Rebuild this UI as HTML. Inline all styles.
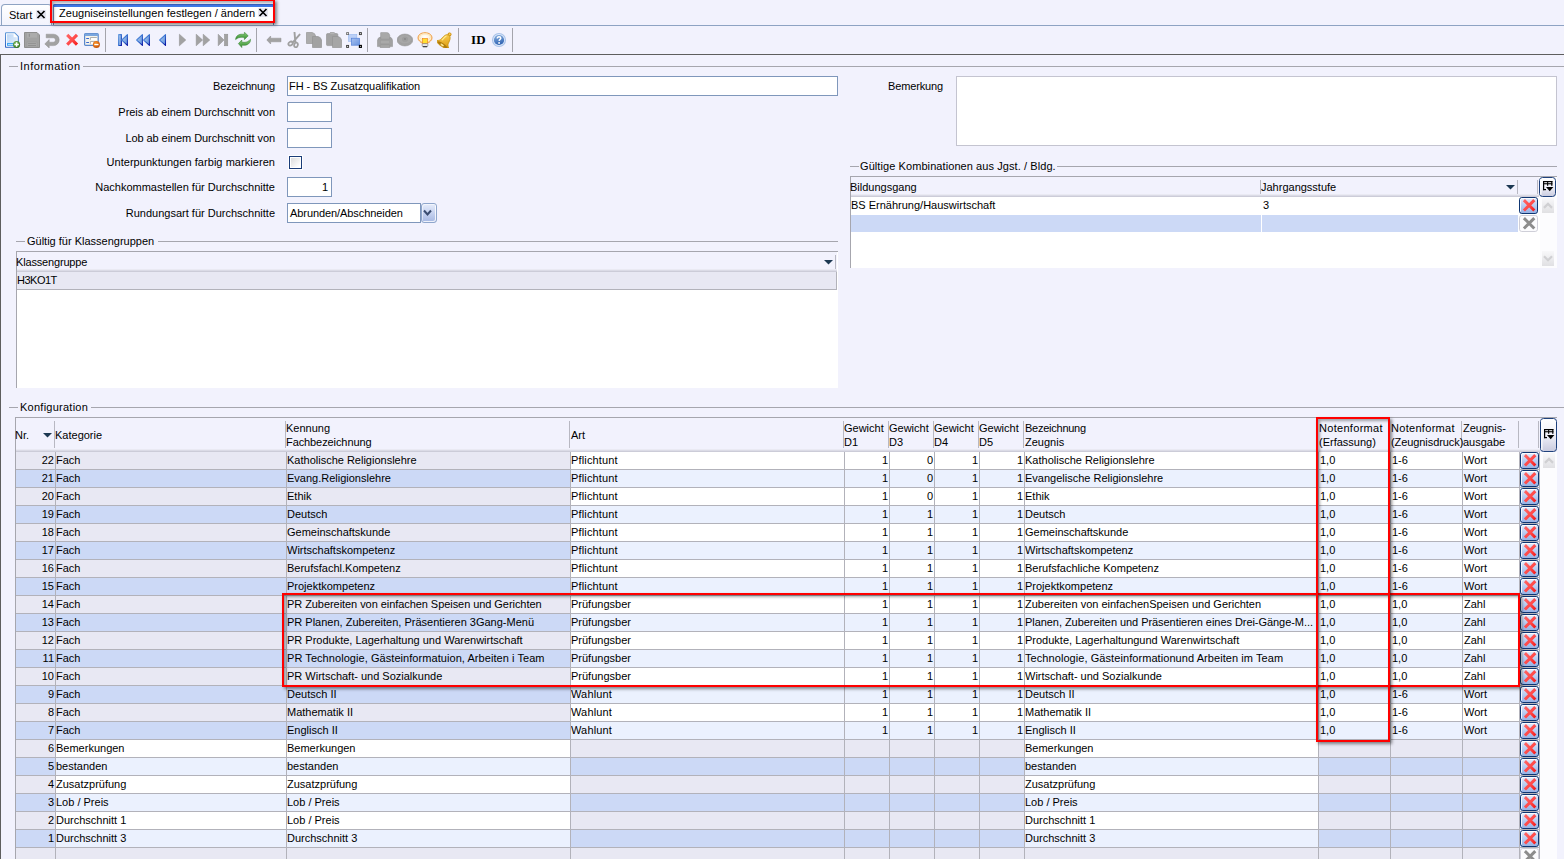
<!DOCTYPE html>
<html><head><meta charset="utf-8"><title>Zeugniseinstellungen festlegen / ändern</title>
<style>
*{box-sizing:border-box;margin:0;padding:0}
html,body{width:1564px;height:859px;overflow:hidden;background:#f2f2fd;}
body{position:relative;font-family:"Liberation Sans",sans-serif;font-size:11px;color:#000;line-height:13px;}
.a{position:absolute;white-space:nowrap;}
.t{position:absolute;white-space:nowrap;height:13px;line-height:13px;}
.r{text-align:right;}
.inp{position:absolute;background:#fff;border:1px solid #7f97bb;}
.gl{position:absolute;height:1px;background:#a6a6ae;}
.hd{position:absolute;width:1px;background:#b8b8c2;}
.cell{position:absolute;height:17px;line-height:17px;white-space:nowrap;overflow:hidden;}
.vl{position:absolute;width:1px;background:#b2b2ba;}
.hl{position:absolute;height:1px;background:#b2b2ba;}
.red{position:absolute;border:2px solid #ff0000;box-shadow:2px 2px 3px rgba(0,0,0,.45), inset 2px 2px 3px rgba(0,0,0,.35);}
.del{position:absolute;width:19px;height:17px;border:1px solid #1f4180;border-radius:3px;background:linear-gradient(#f4f8ff 0%,#dfe9fb 35%,#a9c3f0 100%);}
.delg{position:absolute;width:19px;height:17px;border:1px solid #d0d0d8;border-radius:3px;background:linear-gradient(#ffffff,#ececf2);}
.sb{position:absolute;background:#fcfcfe;}
.sbb{position:absolute;background:linear-gradient(90deg,#f4f4f8,#e4e4ea);}
</style></head><body>
<svg width="0" height="0" style="position:absolute"><defs>
<linearGradient id="gb" x1="0" y1="0" x2="1" y2="0"><stop offset="0" stop-color="#a9c9f2"/><stop offset="0.6" stop-color="#4a86dc"/><stop offset="1" stop-color="#0b2fa8"/></linearGradient>
<linearGradient id="gbf" x1="0" y1="0" x2="1" y2="0.4"><stop offset="0" stop-color="#b6cef0"/><stop offset="1" stop-color="#6c9cde"/></linearGradient>
<linearGradient id="gbs" x1="0" y1="0" x2="1" y2="1"><stop offset="0" stop-color="#6a9ee0"/><stop offset="0.5" stop-color="#3670d0"/><stop offset="1" stop-color="#0610a0"/></linearGradient>
<linearGradient id="gdoc" x1="0" y1="0" x2="1" y2="1"><stop offset="0" stop-color="#bcd6f6"/><stop offset="1" stop-color="#e6f0fc"/></linearGradient>
<linearGradient id="gdocb" x1="0" y1="0" x2="0" y2="1"><stop offset="0" stop-color="#5f98d8"/><stop offset="1" stop-color="#2f62c0"/></linearGradient>
<radialGradient id="ggreen" cx="0.4" cy="0.35" r="0.7"><stop offset="0" stop-color="#7fc060"/><stop offset="1" stop-color="#2c6c12"/></radialGradient>
<radialGradient id="gor" cx="0.4" cy="0.35" r="0.7"><stop offset="0" stop-color="#ff9a30"/><stop offset="1" stop-color="#c04a00"/></radialGradient>
<linearGradient id="gred" x1="0" y1="0" x2="1" y2="1"><stop offset="0" stop-color="#ff6464"/><stop offset="0.55" stop-color="#ff4a4a"/><stop offset="1" stop-color="#f51c1c"/></linearGradient>
<linearGradient id="ggr" x1="0" y1="0" x2="0" y2="1"><stop offset="0" stop-color="#8fd080"/><stop offset="1" stop-color="#2f8a2a"/></linearGradient>
<linearGradient id="gsel" x1="0" y1="0" x2="1" y2="1"><stop offset="0" stop-color="#a8c2f0"/><stop offset="1" stop-color="#6a94e0"/></linearGradient>
<linearGradient id="ghelp" x1="0" y1="0" x2="0.3" y2="1"><stop offset="0" stop-color="#8ab2e2"/><stop offset="1" stop-color="#3366b4"/></linearGradient>
<linearGradient id="gbell" x1="0" y1="0" x2="1" y2="1"><stop offset="0" stop-color="#ffd860"/><stop offset="1" stop-color="#d89408"/></linearGradient>
<radialGradient id="gbulb" cx="0.5" cy="0.4" r="0.6"><stop offset="0" stop-color="#ffffff"/><stop offset="0.7" stop-color="#fff0d0"/><stop offset="1" stop-color="#f4a850"/></radialGradient>
<linearGradient id="gsb" x1="0" y1="0" x2="0" y2="1"><stop offset="0" stop-color="#f8f8fa"/><stop offset="1" stop-color="#e0e0e3"/></linearGradient>
<linearGradient id="gdel" x1="0" y1="0" x2="0" y2="1"><stop offset="0" stop-color="#e8effc"/><stop offset="0.45" stop-color="#bdd0f3"/><stop offset="1" stop-color="#94b0e4"/></linearGradient>
</defs></svg>
<div class="a" style="left:0;top:25px;width:1564px;height:1px;background:#8ea3c3"></div>
<div class="a" style="left:1px;top:4px;width:51px;height:21px;border:1px solid #8ea3c3;border-bottom:none;border-radius:4px 4px 0 0;background:linear-gradient(#ffffff,#f2f3fd)"></div>
<div class="t " style="left:9px;top:9px;">Start</div>
<svg class="a" style="left:36px;top:10px" width="10" height="9" viewBox="0 0 10 9"><rect x="0" y="0" width="10" height="9" fill="#e4e4ee"/><path d="M1.5 1 L8.5 8 M8.5 1 L1.5 8" stroke="#000" stroke-width="1.7"/></svg>
<div class="a" style="left:53px;top:4px;width:221px;height:21px;background:#fff;border-left:1px solid #6c86b0;border-right:1px solid #6c86b0;border-radius:2px 2px 0 0;"></div>
<div class="a" style="left:53px;top:4px;width:221px;height:3px;background:#3f78e6;border-radius:2px 2px 0 0;border-top:1px solid #3a62c0"></div>
<div class="t " style="left:59px;top:7px;letter-spacing:0.03px">Zeugniseinstellungen festlegen / ändern</div>
<svg class="a" style="left:258px;top:8px" width="10" height="9" viewBox="0 0 10 9"><rect x="0" y="0" width="10" height="9" fill="#e8e8f2"/><path d="M1.5 1 L8.5 8 M8.5 1 L1.5 8" stroke="#000" stroke-width="1.7"/></svg>
<div class="red" style="left:50px;top:-1px;width:225px;height:24px;box-shadow:2px 2px 3px rgba(0,0,0,.45), inset 2px 2px 3px rgba(0,0,0,.3)"></div>
<svg class="a" style="left:5px;top:32px" width="16" height="16" viewBox="0 0 16 16"><path d="M1.2 0.7 H9.6 L13.3 4.4 V14.4 Q13.3 15.3 12.4 15.3 H1.2 Q0.5 15.3 0.5 14.4 V1.5 Q0.5 0.7 1.2 0.7 Z" fill="#fff" stroke="url(#gdocb)" stroke-width="1.1"/><path d="M2 2.2 H8.6 V5.3 H11.8 V13.8 H2 Z" fill="url(#gdoc)"/><rect x="2" y="11" width="9" height="2.8" fill="#3fa4f4"/><rect x="3" y="12" width="5" height="0.9" fill="#bfe2ff"/><circle cx="11.6" cy="12.5" r="3.5" fill="url(#ggreen)"/><path d="M11.6 10.3 V14.7 M9.4 12.5 H13.8" stroke="#fff" stroke-width="1.5"/></svg>
<svg class="a" style="left:24px;top:32px" width="16" height="16" viewBox="0 0 16 16"><path d="M0.5 0.5 H13 L15.5 3 V15.5 H0.5 Z" fill="#a2a2a2" stroke="#8e8e8e" stroke-width="1"/><rect x="3" y="1" width="10" height="4.6" fill="#acacac"/><rect x="4.8" y="1.8" width="1.1" height="3" fill="#8e8e8e"/><rect x="3" y="10" width="10" height="5" fill="#acacac" stroke="#989898" stroke-width="0.6"/><rect x="4" y="11.2" width="8" height="0.9" fill="#8e8e8e"/><rect x="4" y="13" width="8" height="0.9" fill="#8e8e8e"/></svg>
<svg class="a" style="left:44px;top:32px" width="16" height="16" viewBox="0 0 16 16"><path d="M2.2 2.2 H9.5 A5.3 5.3 0 0 1 9.5 13.6 H5.2 V16 L0.8 11.9 L5.2 7.6 V10.2 H9.3 A2.2 2.2 0 0 0 9.3 5.8 H2.2 Z" fill="#a2a2a2" stroke="#8e8e8e" stroke-width="0.5"/></svg>
<svg class="a" style="left:64px;top:32px" width="16" height="16" viewBox="0 0 16 16"><path d="M3.2 2.8 L13 12.6 M13 2.8 L3.2 12.6" stroke="url(#gred)" stroke-width="3.1" stroke-linecap="butt"/></svg>
<svg class="a" style="left:84px;top:32px" width="16" height="16" viewBox="0 0 16 16"><rect x="0.6" y="1.6" width="13.6" height="11.8" rx="1" fill="#f6f4ec" stroke="#5a88cc" stroke-width="1.2"/><rect x="0.6" y="1.6" width="13.6" height="2.4" fill="#7aa6de"/><rect x="2.2" y="6" width="2.8" height="1" fill="#3a68d0"/><rect x="2.2" y="10" width="2.8" height="1" fill="#3a68d0"/><path d="M6.4 7.8 V5.6 H12.8" fill="none" stroke="#a0a0a0" stroke-width="0.9"/><path d="M6.4 11.8 V9.6 H12.8" fill="none" stroke="#a0a0a0" stroke-width="0.9"/><rect x="6.9" y="6.1" width="6" height="2" fill="#fff"/><rect x="6.9" y="10.1" width="6" height="2" fill="#fff"/><circle cx="12.4" cy="12.5" r="3.5" fill="url(#gor)"/><rect x="10.3" y="11.9" width="4.2" height="1.3" fill="#fff"/></svg>
<svg class="a" style="left:116px;top:32px" width="16" height="16" viewBox="0 0 16 16"><rect x="2.6" y="2.6" width="2.8" height="10.8" fill="url(#gbf)" stroke="url(#gbs)" stroke-width="1.05" stroke-linejoin="round"/><path d="M11.4 2.6 V13.4 L5.8 8 Z" fill="url(#gbf)" stroke="url(#gbs)" stroke-width="1.05" stroke-linejoin="round"/></svg>
<svg class="a" style="left:135px;top:32px" width="16" height="16" viewBox="0 0 16 16"><path d="M7.4 2.6 V13.4 L1.6 8 Z" fill="url(#gbf)" stroke="url(#gbs)" stroke-width="1.05" stroke-linejoin="round"/><path d="M14.4 2.6 V13.4 L8.6 8 Z" fill="url(#gbf)" stroke="url(#gbs)" stroke-width="1.05" stroke-linejoin="round"/></svg>
<svg class="a" style="left:155px;top:32px" width="16" height="16" viewBox="0 0 16 16"><path d="M10.5 2.6 V13.4 L4.6 8 Z" fill="url(#gbf)" stroke="url(#gbs)" stroke-width="1.05" stroke-linejoin="round"/></svg>
<svg class="a" style="left:175px;top:32px" width="16" height="16" viewBox="0 0 16 16"><path d="M4.4 2.2 V13.8 L10.8 8 Z" fill="#a2a2a2" stroke="#8e8e8e" stroke-width="0.5"/></svg>
<svg class="a" style="left:195px;top:32px" width="16" height="16" viewBox="0 0 16 16"><path d="M1.2 2.2 V13.8 L7.6 8 Z" fill="#a2a2a2" stroke="#8e8e8e" stroke-width="0.5"/><path d="M8.2 2.2 V13.8 L14.8 8 Z" fill="#a2a2a2" stroke="#8e8e8e" stroke-width="0.5"/></svg>
<svg class="a" style="left:215px;top:32px" width="16" height="16" viewBox="0 0 16 16"><path d="M3.2 2.2 V13.8 L9 8 Z" fill="#a2a2a2" stroke="#8e8e8e" stroke-width="0.5"/><rect x="9.4" y="2.2" width="3.4" height="11.6" fill="#a2a2a2" stroke="#8e8e8e" stroke-width="0.5"/></svg>
<svg class="a" style="left:235px;top:32px" width="16" height="16" viewBox="0 0 16 16"><path d="M0.6 7.6 C0.8 3.6 4 2 7.4 2.2 L9.4 2.3 V0.2 L13.2 3.8 L9.4 7.6 V5.4 L7 5.3 C4.4 5.2 2.6 6 0.6 7.6 Z" fill="url(#ggr)" stroke="#2c7a26" stroke-width="0.5"/><path d="M15.6 7.2 C15.6 11.4 12.4 13.4 9 13.3 L6.8 13.2 V15.6 L3.4 11.6 L6.8 8 V10.2 L9.2 10.3 C11.8 10.4 13.6 9.2 15.6 7.2 Z" fill="url(#ggr)" stroke="#2c7a26" stroke-width="0.5"/></svg>
<svg class="a" style="left:266px;top:32px" width="16" height="16" viewBox="0 0 16 16"><path d="M0.8 8 L4.6 4 V6.2 H15 V9.8 H4.6 V12 Z" fill="#a2a2a2" stroke="#8e8e8e" stroke-width="0.5"/></svg>
<svg class="a" style="left:286px;top:32px" width="16" height="16" viewBox="0 0 16 16"><path d="M8.5 0.4 L9.3 9.6 M13.6 2.6 L6.6 10.6" stroke="#a0a0a0" stroke-width="1.9" fill="none" stroke-linecap="round"/><ellipse cx="4.6" cy="11.6" rx="2.3" ry="1.8" transform="rotate(-35 4.6 11.6)" fill="none" stroke="#a0a0a0" stroke-width="1.8"/><ellipse cx="10" cy="12.9" rx="1.8" ry="2.4" transform="rotate(15 10 12.9)" fill="none" stroke="#a0a0a0" stroke-width="1.8"/></svg>
<svg class="a" style="left:306px;top:32px" width="16" height="16" viewBox="0 0 16 16"><path d="M0.5 0.5 H6.2 Q9.2 1.2 9.6 4 V11.5 H0.5 Z" fill="#acacac" stroke="#979797" stroke-width="0.7"/><path d="M6.5 4.5 H12 Q15 5.2 15.5 8 V15.5 H6.5 Z" fill="#a2a2a2" stroke="#949494" stroke-width="0.7"/></svg>
<svg class="a" style="left:326px;top:32px" width="16" height="16" viewBox="0 0 16 16"><path d="M1.5 1.6 H3.6 Q4 0.4 5 0.4 H7.6 Q8.6 0.4 9 1.6 H10.8 Q11.8 1.6 11.8 2.6 V12.6 Q11.8 13.6 10.8 13.6 H1.5 Q0.5 13.6 0.5 12.6 V2.6 Q0.5 1.6 1.5 1.6 Z" fill="#a2a2a2" stroke="#8e8e8e" stroke-width="0.6"/><rect x="4.2" y="1" width="4.2" height="1.2" fill="#b4b4b4"/><path d="M6.5 4.5 H12 Q15 5.2 15.5 8 V15.5 H6.5 Z" fill="#a6a6a6" stroke="#949494" stroke-width="0.7"/></svg>
<svg class="a" style="left:346px;top:32px" width="16" height="16" viewBox="0 0 16 16"><rect x="2.4" y="2.4" width="8.4" height="7" fill="#bcd0f6" stroke="#98b8f0" stroke-width="0.6"/><rect x="5.4" y="6.2" width="8.2" height="7" fill="url(#gsel)" stroke="#4a78d4" stroke-width="0.6"/><rect x="0.6" y="0.6" width="2" height="2" fill="#e4e4e4" stroke="#6a6a6a" stroke-width="0.8"/><rect x="13.4" y="0.6" width="2" height="2" fill="#ddd" stroke="#3a3a3a" stroke-width="0.9"/><rect x="0.6" y="13.4" width="2" height="2" fill="#ddd" stroke="#3a3a3a" stroke-width="0.9"/><rect x="13.4" y="13.4" width="2" height="2" fill="#ddd" stroke="#000" stroke-width="1.1"/></svg>
<svg class="a" style="left:377px;top:32px" width="16" height="16" viewBox="0 0 16 16"><path d="M0.4 14.6 V9 Q0.4 5.2 4 4.9 H12 Q15.6 5.2 15.6 9 V14.6 Z" fill="#a2a2a2" stroke="#8e8e8e" stroke-width="0.5"/><path d="M3.6 7.2 V0.9 Q3.6 0.4 4.2 0.4 H9.6 Q12.6 0.8 12.8 3.6 V7.2 Z" fill="#a8a8a8" stroke="#8e8e8e" stroke-width="0.5"/><rect x="3.6" y="8.4" width="9" height="3.4" fill="#a9a9a9" stroke="#999" stroke-width="0.4"/><path d="M3.2 15.7 V13.4 Q3.2 12.6 4 12.6 H12 Q12.8 12.6 12.8 13.4 V15.7 Z" fill="#a6a6a6" stroke="#8e8e8e" stroke-width="0.5"/></svg>
<svg class="a" style="left:397px;top:32px" width="16" height="16" viewBox="0 0 16 16"><ellipse cx="7.9" cy="8" rx="7.9" ry="6" fill="#a2a2a2" stroke="#8e8e8e" stroke-width="0.5"/><ellipse cx="7.9" cy="7.4" rx="6.6" ry="4.4" fill="#a7a7a7" stroke="#9c9c9c" stroke-width="0.4"/><ellipse cx="8" cy="7.2" rx="3" ry="2.6" fill="#9e9e9e"/><circle cx="8" cy="7" r="0.9" fill="#868686"/></svg>
<svg class="a" style="left:417px;top:32px" width="16" height="16" viewBox="0 0 16 16"><path d="M8 0.7 C12.2 0.7 15 3 15 6 C15 8.6 12.4 9.6 11 11.4 H5 C3.6 9.6 1 8.6 1 6 C1 3 3.8 0.7 8 0.7 Z" fill="url(#gbulb)" stroke="#f0a048" stroke-width="1"/><ellipse cx="8" cy="5" rx="5.4" ry="3" fill="none" stroke="#fbd8a0" stroke-width="0.6"/><rect x="5.6" y="6.6" width="4.8" height="4.8" fill="#ffe030" stroke="#f08820" stroke-width="0.7"/><rect x="5.2" y="11.6" width="5.6" height="3" rx="0.8" fill="#e8e8e8" stroke="#707070" stroke-width="0.6"/><rect x="5.8" y="14" width="4.4" height="1.2" rx="0.5" fill="#404040"/></svg>
<svg class="a" style="left:437px;top:32px" width="16" height="16" viewBox="0 0 16 16"><g transform="translate(0.3 0.5) rotate(33 8 8) translate(8 8) scale(1.14 1.02) translate(-8.4 -8)"><circle cx="8.6" cy="0.6" r="1.3" fill="#f8d050" stroke="#d09010" stroke-width="0.8"/><path d="M8.4 1.8 C11 1.8 11.6 5.2 12 8.6 C12.3 10.6 13.4 11.6 14.4 12.4 C14.8 13.6 12.4 14.8 8.4 14.8 C4.4 14.8 2 13.6 2.4 12.4 C3.4 11.6 4.5 10.6 4.8 8.6 C5.2 5.2 5.8 1.8 8.4 1.8 Z" fill="url(#gbell)" stroke="#c89008" stroke-width="0.7"/><path d="M7 3.4 C6.2 5 6 7.6 5.8 9.6" fill="none" stroke="#fff0a0" stroke-width="1" opacity="0.9"/><ellipse cx="8.4" cy="13" rx="5.2" ry="1.5" fill="#b07c0c"/><ellipse cx="8.2" cy="13.3" rx="1.7" ry="0.9" fill="#ffe890"/></g></svg>
<div class="a" style="left:471px;top:33px;font-family:'Liberation Serif',serif;font-weight:bold;font-size:13px;line-height:14px;letter-spacing:0.2px">ID</div>
<svg class="a" style="left:491px;top:32px" width="16" height="16" viewBox="0 0 16 16"><circle cx="8" cy="8" r="6.5" fill="#dfe9f8" stroke="#a9c3ea" stroke-width="1.1"/><circle cx="8" cy="8" r="5.1" fill="url(#ghelp)"/><path d="M6.3 6.5 C6.3 5.3 7.1 4.7 8.1 4.7 C9.1 4.7 9.8 5.3 9.8 6.2 C9.8 7.3 8.2 7.5 8.1 8.9" fill="none" stroke="#fff" stroke-width="1.5"/><circle cx="8.1" cy="10.9" r="0.95" fill="#fff"/></svg>
<div class="a" style="left:105px;top:28px;width:1px;height:24px;background:#a4a4ac"></div>
<div class="a" style="left:256px;top:28px;width:1px;height:24px;background:#a4a4ac"></div>
<div class="a" style="left:367px;top:28px;width:1px;height:24px;background:#a4a4ac"></div>
<div class="a" style="left:458px;top:28px;width:1px;height:24px;background:#a4a4ac"></div>
<div class="a" style="left:512px;top:28px;width:1px;height:24px;background:#a4a4ac"></div>
<div class="a" style="left:0;top:54px;width:1564px;height:1px;background:#5e5e5e"></div>
<div class="a" style="left:0;top:54px;width:1px;height:805px;background:#5e5e5e"></div>
<div class="gl" style="left:9px;top:66px;width:9px"></div>
<div class="t " style="left:20px;top:60px;letter-spacing:0.5px">Information</div>
<div class="gl" style="left:83px;top:66px;width:1481px"></div>
<div class="t r" style="left:60px;top:80px;width:215px;letter-spacing:-0.15px">Bezeichnung</div>
<div class="t r" style="left:60px;top:106px;width:215px;letter-spacing:-0.055px">Preis ab einem Durchschnitt von</div>
<div class="t r" style="left:60px;top:132px;width:215px;letter-spacing:-0.07px">Lob ab einem Durchschnitt von</div>
<div class="t r" style="left:60px;top:156px;width:215px;letter-spacing:0.05px">Unterpunktungen farbig markieren</div>
<div class="t r" style="left:60px;top:181px;width:215px;letter-spacing:0px">Nachkommastellen für Durchschnitte</div>
<div class="t r" style="left:60px;top:207px;width:215px;letter-spacing:0px">Rundungsart für Durchschnitte</div>
<div class="inp" style="left:287px;top:76px;width:551px;height:20px"></div>
<div class="t " style="left:289px;top:80px;letter-spacing:-0.08px">FH - BS Zusatzqualifikation</div>
<div class="inp" style="left:287px;top:102px;width:45px;height:20px"></div>
<div class="inp" style="left:287px;top:128px;width:45px;height:20px"></div>
<div class="a" style="left:289px;top:156px;width:13px;height:13px;border:1px solid #1a3c78;background:linear-gradient(135deg,#dcdcdc 10%,#ffffff 85%);box-shadow:0 0 0 1px rgba(255,255,255,.9), inset 0 0 0 1px #fff"></div>
<div class="inp" style="left:287px;top:177px;width:45px;height:20px"></div>
<div class="t r" style="left:301px;top:181px;width:27px;">1</div>
<div class="inp" style="left:287px;top:203px;width:134px;height:20px"></div>
<div class="t " style="left:290px;top:207px;letter-spacing:-0.08px">Abrunden/Abschneiden</div>
<div class="a" style="left:421px;top:203px;width:16px;height:20px;border:1px solid #8fa6cc;border-radius:3px;background:linear-gradient(#e6ecfa,#c6d2f0 50%,#a6b8e2);box-shadow:inset -1px -1px 0 rgba(255,255,255,.8), inset 1px 1px 0 rgba(255,255,255,.5)"></div>
<svg class="a" style="left:423px;top:209px" width="9" height="8" viewBox="0 0 9 8"><path d="M1 1.5 L4.5 5.5 L8 1.5" fill="none" stroke="#3a4c70" stroke-width="2"/></svg>
<div class="t " style="left:888px;top:80px;letter-spacing:-0.15px">Bemerkung</div>
<div class="a" style="left:956px;top:76px;width:601px;height:70px;background:#fff;border:1px solid #c4c4d0"></div>
<div class="gl" style="left:16px;top:241px;width:9px"></div>
<div class="t " style="left:27px;top:235px;letter-spacing:0px">Gültig für Klassengruppen</div>
<div class="gl" style="left:158px;top:241px;width:680px"></div>
<div class="a" style="left:16px;top:251px;width:822px;height:137px;background:#fff;border-top:1px solid #a6a6ae;border-left:1px solid #a6a6ae"></div>
<div class="a" style="left:17px;top:252px;width:820px;height:20px;background:linear-gradient(#f2f2fd 0,#f2f2fd 17px,#eaeaf3 17px,#eaeaf3 18px,#dbdbe6 18px,#dbdbe6 19px,#ccccd8 19px)"></div>
<div class="t " style="left:16px;top:256px;letter-spacing:-0.17px">Klassengruppe</div>
<div class="hd" style="left:835px;top:255px;height:14px"></div>
<svg class="a" style="left:824px;top:260px" width="9" height="5" viewBox="0 0 9 5"><path d="M0 0 H9 L4.5 4.6 Z" fill="#1c3852"/></svg>
<div class="a" style="left:17px;top:272px;width:820px;height:18px;background:#e8e8f3;border-bottom:1px solid #b2b2ba;border-right:1px solid #b2b2ba"></div>
<div class="t " style="left:17px;top:274px;letter-spacing:-0.5px">H3KO1T</div>
<div class="gl" style="left:850px;top:166px;width:9px"></div>
<div class="t " style="left:860px;top:160px;letter-spacing:0.08px">Gültige Kombinationen aus Jgst. / Bldg.</div>
<div class="gl" style="left:1057px;top:166px;width:500px"></div>
<div class="a" style="left:850px;top:176px;width:707px;height:92px;background:#fff;border-top:1px solid #a6a6ae;border-left:1px solid #a6a6ae"></div>
<div class="a" style="left:851px;top:177px;width:688px;height:20px;background:linear-gradient(#f2f2fd 0,#f2f2fd 17px,#eaeaf3 17px,#eaeaf3 18px,#dbdbe6 18px,#dbdbe6 19px,#ccccd8 19px)"></div>
<div class="t " style="left:850px;top:181px;">Bildungsgang</div>
<div class="t " style="left:1261px;top:181px;">Jahrgangsstufe</div>
<div class="hd" style="left:1260px;top:180px;height:14px"></div>
<div class="hd" style="left:1517px;top:180px;height:14px"></div>
<div class="hd" style="left:1537px;top:180px;height:14px"></div>
<svg class="a" style="left:1506px;top:185px" width="9" height="5" viewBox="0 0 9 5"><path d="M0 0 H9 L4.5 4.6 Z" fill="#1c3852"/></svg>
<div class="t " style="left:851px;top:199px;">BS Ernährung/Hauswirtschaft</div>
<div class="t " style="left:1263px;top:199px;">3</div>
<div class="a" style="left:851px;top:215px;width:410px;height:17px;background:#ccd9f6"></div>
<div class="a" style="left:1262px;top:215px;width:256px;height:17px;background:#ccd9f6"></div>
<svg class="a" style="left:1539px;top:177px" width="17" height="20" viewBox="0 0 17 20"><defs><linearGradient id="gch177" x1="0" y1="0" x2="0" y2="1"><stop offset="0" stop-color="#ffffff"/><stop offset="0.5" stop-color="#f0f0f8"/><stop offset="1" stop-color="#c8cade"/></linearGradient></defs><rect x="0.5" y="0.5" width="16" height="19" rx="3" fill="url(#gch177)" stroke="#1f417c"/><rect x="1.2" y="2" width="1.3" height="16" fill="#fff" opacity="0.9"/><g transform="translate(4 4)" fill="#000"><rect x="0" y="0" width="9.4" height="1.2"/><rect x="0" y="2.2" width="9.4" height="1.1"/><rect x="0" y="0" width="1.2" height="9.2"/><rect x="4.1" y="0" width="1.1" height="4.8"/><rect x="8.2" y="0" width="1.2" height="4.8"/><rect x="0" y="8" width="3" height="1.2"/><path d="M3 6 H10.4 L6.7 10.2 Z"/></g></svg>
<svg class="a" style="left:1519px;top:197px" width="19" height="17" viewBox="0 0 19 17"><rect x="0.5" y="0.5" width="18" height="16" rx="2.3" fill="url(#gdel)" stroke="#0f3672"/><path d="M1.5 14.5 V3.2 Q1.5 1.5 3.2 1.5 H16.5" fill="none" stroke="#fff" stroke-width="1" opacity="0.85"/><path d="M4.8999999999999995 3.1000000000000005 L15.3 13.5 M15.3 3.1000000000000005 L4.8999999999999995 13.5" stroke="url(#gred)" stroke-width="3.0"/></svg><svg class="a" style="left:1519px;top:215px" width="19" height="17" viewBox="0 0 19 17"><rect x="0.5" y="0.5" width="18" height="16" rx="2.3" fill="#fbfbfd" stroke="#cfcfd8"/><path d="M4.8999999999999995 3.1000000000000005 L15.3 13.5 M15.3 3.1000000000000005 L4.8999999999999995 13.5" stroke="#8c8c8c" stroke-width="3.0"/></svg>
<div class="sb" style="left:1540px;top:197px;width:17px;height:71px"></div>
<svg class="a" style="left:1540px;top:198px" width="16" height="15" viewBox="0 0 16 15"><rect x="2" y="0" width="12" height="15" fill="url(#gsb)"/><path d="M4.0 9.9 L8.0 5.9 L12.0 9.9" fill="none" stroke="#d0d0d3" stroke-width="2.2"/></svg><svg class="a" style="left:1540px;top:251px" width="16" height="15" viewBox="0 0 16 15"><rect x="2" y="0" width="12" height="15" fill="url(#gsb)"/><path d="M4.0 5.3 L8.0 9.3 L12.0 5.3" fill="none" stroke="#d0d0d3" stroke-width="2.2"/></svg>
<div class="gl" style="left:9px;top:407px;width:9px"></div>
<div class="t " style="left:20px;top:401px;letter-spacing:0.25px">Konfiguration</div>
<div class="gl" style="left:91px;top:407px;width:1473px"></div>
<div class="a" style="left:15px;top:417px;width:1542px;height:442px;border-top:1px solid #a6a6ae;border-left:1px solid #a6a6ae"></div>
<div class="a" style="left:16px;top:418px;width:1524px;height:34px;background:linear-gradient(#f2f2fd 0,#f2f2fd 31px,#eaeaf3 31px,#eaeaf3 32px,#dbdbe6 32px,#dbdbe6 33px,#ccccd8 33px)"></div>
<div class="hd" style="left:54px;top:421px;height:27px"></div>
<div class="hd" style="left:285px;top:421px;height:27px"></div>
<div class="hd" style="left:569px;top:421px;height:27px"></div>
<div class="hd" style="left:843px;top:421px;height:27px"></div>
<div class="hd" style="left:888px;top:421px;height:27px"></div>
<div class="hd" style="left:933px;top:421px;height:27px"></div>
<div class="hd" style="left:978px;top:421px;height:27px"></div>
<div class="hd" style="left:1023px;top:421px;height:27px"></div>
<div class="hd" style="left:1317px;top:421px;height:27px"></div>
<div class="hd" style="left:1389px;top:421px;height:27px"></div>
<div class="hd" style="left:1461px;top:421px;height:27px"></div>
<div class="hd" style="left:1518px;top:421px;height:27px"></div>
<div class="hd" style="left:1538px;top:421px;height:27px"></div>
<div class="t " style="left:15px;top:429px;">Nr.</div>
<div class="t " style="left:55px;top:429px;">Kategorie</div>
<div class="t " style="left:286px;top:422px;letter-spacing:0px">Kennung</div>
<div class="t " style="left:286px;top:436px;letter-spacing:-0.09px">Fachbezeichnung</div>
<div class="t " style="left:571px;top:429px;">Art</div>
<div class="t " style="left:844px;top:422px;letter-spacing:0px">Gewicht</div>
<div class="t " style="left:844px;top:436px;letter-spacing:0px">D1</div>
<div class="t " style="left:889px;top:422px;letter-spacing:0px">Gewicht</div>
<div class="t " style="left:889px;top:436px;letter-spacing:0px">D3</div>
<div class="t " style="left:934px;top:422px;letter-spacing:0px">Gewicht</div>
<div class="t " style="left:934px;top:436px;letter-spacing:0px">D4</div>
<div class="t " style="left:979px;top:422px;letter-spacing:0px">Gewicht</div>
<div class="t " style="left:979px;top:436px;letter-spacing:0px">D5</div>
<div class="t " style="left:1025px;top:422px;letter-spacing:-0.25px">Bezeichnung</div>
<div class="t " style="left:1025px;top:436px;letter-spacing:0px">Zeugnis</div>
<div class="t " style="left:1319px;top:422px;letter-spacing:0.3px">Notenformat</div>
<div class="t " style="left:1319px;top:436px;letter-spacing:0px">(Erfassung)</div>
<div class="t " style="left:1391px;top:422px;letter-spacing:0.3px">Notenformat</div>
<div class="t " style="left:1391px;top:436px;letter-spacing:-0.08px">(Zeugnisdruck)</div>
<div class="t " style="left:1463px;top:422px;letter-spacing:0px">Zeugnis-</div>
<div class="t " style="left:1463px;top:436px;letter-spacing:0px">ausgabe</div>
<svg class="a" style="left:43px;top:433px" width="9" height="5" viewBox="0 0 9 5"><path d="M0 0 H9 L4.5 4.6 Z" fill="#1c3852"/></svg>
<div class="cell" style="left:16px;top:452px;width:39px;height:17px;background:#e8e8f3;text-align:right;padding-right:1px;">22</div>
<div class="cell" style="left:56px;top:452px;width:230px;height:17px;background:#e8e8f3;">Fach</div>
<div class="cell" style="left:287px;top:452px;width:283px;height:17px;background:#e8e8f3;">Katholische Religionslehre</div>
<div class="cell" style="left:571px;top:452px;width:273px;height:17px;background:#ffffff;letter-spacing:0.15px;">Pflichtunt</div>
<div class="cell" style="left:845px;top:452px;width:44px;height:17px;background:#ffffff;text-align:right;padding-right:1px;">1</div>
<div class="cell" style="left:890px;top:452px;width:44px;height:17px;background:#ffffff;text-align:right;padding-right:1px;">0</div>
<div class="cell" style="left:935px;top:452px;width:44px;height:17px;background:#ffffff;text-align:right;padding-right:1px;">1</div>
<div class="cell" style="left:980px;top:452px;width:44px;height:17px;background:#ffffff;text-align:right;padding-right:1px;">1</div>
<div class="cell" style="left:1025px;top:452px;width:293px;height:17px;background:#ffffff;">Katholische Religionslehre</div>
<div class="cell" style="left:1319px;top:452px;width:71px;height:17px;background:#ffffff;padding-left:1px;">1,0</div>
<div class="cell" style="left:1391px;top:452px;width:71px;height:17px;background:#ffffff;padding-left:1px;">1-6</div>
<div class="cell" style="left:1463px;top:452px;width:56px;height:17px;background:#ffffff;padding-left:1px;">Wort</div>
<div class="hl" style="left:16px;top:469px;width:1524px"></div>
<div class="cell" style="left:16px;top:470px;width:39px;height:17px;background:#ccd9f6;text-align:right;padding-right:1px;">21</div>
<div class="cell" style="left:56px;top:470px;width:230px;height:17px;background:#ccd9f6;">Fach</div>
<div class="cell" style="left:287px;top:470px;width:283px;height:17px;background:#ccd9f6;">Evang.Religionslehre</div>
<div class="cell" style="left:571px;top:470px;width:273px;height:17px;background:#ebf1fe;letter-spacing:0.15px;">Pflichtunt</div>
<div class="cell" style="left:845px;top:470px;width:44px;height:17px;background:#ebf1fe;text-align:right;padding-right:1px;">1</div>
<div class="cell" style="left:890px;top:470px;width:44px;height:17px;background:#ebf1fe;text-align:right;padding-right:1px;">0</div>
<div class="cell" style="left:935px;top:470px;width:44px;height:17px;background:#ebf1fe;text-align:right;padding-right:1px;">1</div>
<div class="cell" style="left:980px;top:470px;width:44px;height:17px;background:#ebf1fe;text-align:right;padding-right:1px;">1</div>
<div class="cell" style="left:1025px;top:470px;width:293px;height:17px;background:#ebf1fe;">Evangelische Religionslehre</div>
<div class="cell" style="left:1319px;top:470px;width:71px;height:17px;background:#ebf1fe;padding-left:1px;">1,0</div>
<div class="cell" style="left:1391px;top:470px;width:71px;height:17px;background:#ebf1fe;padding-left:1px;">1-6</div>
<div class="cell" style="left:1463px;top:470px;width:56px;height:17px;background:#ebf1fe;padding-left:1px;">Wort</div>
<div class="hl" style="left:16px;top:487px;width:1524px"></div>
<div class="cell" style="left:16px;top:488px;width:39px;height:17px;background:#e8e8f3;text-align:right;padding-right:1px;">20</div>
<div class="cell" style="left:56px;top:488px;width:230px;height:17px;background:#e8e8f3;">Fach</div>
<div class="cell" style="left:287px;top:488px;width:283px;height:17px;background:#e8e8f3;">Ethik</div>
<div class="cell" style="left:571px;top:488px;width:273px;height:17px;background:#ffffff;letter-spacing:0.15px;">Pflichtunt</div>
<div class="cell" style="left:845px;top:488px;width:44px;height:17px;background:#ffffff;text-align:right;padding-right:1px;">1</div>
<div class="cell" style="left:890px;top:488px;width:44px;height:17px;background:#ffffff;text-align:right;padding-right:1px;">0</div>
<div class="cell" style="left:935px;top:488px;width:44px;height:17px;background:#ffffff;text-align:right;padding-right:1px;">1</div>
<div class="cell" style="left:980px;top:488px;width:44px;height:17px;background:#ffffff;text-align:right;padding-right:1px;">1</div>
<div class="cell" style="left:1025px;top:488px;width:293px;height:17px;background:#ffffff;">Ethik</div>
<div class="cell" style="left:1319px;top:488px;width:71px;height:17px;background:#ffffff;padding-left:1px;">1,0</div>
<div class="cell" style="left:1391px;top:488px;width:71px;height:17px;background:#ffffff;padding-left:1px;">1-6</div>
<div class="cell" style="left:1463px;top:488px;width:56px;height:17px;background:#ffffff;padding-left:1px;">Wort</div>
<div class="hl" style="left:16px;top:505px;width:1524px"></div>
<div class="cell" style="left:16px;top:506px;width:39px;height:17px;background:#ccd9f6;text-align:right;padding-right:1px;">19</div>
<div class="cell" style="left:56px;top:506px;width:230px;height:17px;background:#ccd9f6;">Fach</div>
<div class="cell" style="left:287px;top:506px;width:283px;height:17px;background:#ccd9f6;">Deutsch</div>
<div class="cell" style="left:571px;top:506px;width:273px;height:17px;background:#ebf1fe;letter-spacing:0.15px;">Pflichtunt</div>
<div class="cell" style="left:845px;top:506px;width:44px;height:17px;background:#ebf1fe;text-align:right;padding-right:1px;">1</div>
<div class="cell" style="left:890px;top:506px;width:44px;height:17px;background:#ebf1fe;text-align:right;padding-right:1px;">1</div>
<div class="cell" style="left:935px;top:506px;width:44px;height:17px;background:#ebf1fe;text-align:right;padding-right:1px;">1</div>
<div class="cell" style="left:980px;top:506px;width:44px;height:17px;background:#ebf1fe;text-align:right;padding-right:1px;">1</div>
<div class="cell" style="left:1025px;top:506px;width:293px;height:17px;background:#ebf1fe;">Deutsch</div>
<div class="cell" style="left:1319px;top:506px;width:71px;height:17px;background:#ebf1fe;padding-left:1px;">1,0</div>
<div class="cell" style="left:1391px;top:506px;width:71px;height:17px;background:#ebf1fe;padding-left:1px;">1-6</div>
<div class="cell" style="left:1463px;top:506px;width:56px;height:17px;background:#ebf1fe;padding-left:1px;">Wort</div>
<div class="hl" style="left:16px;top:523px;width:1524px"></div>
<div class="cell" style="left:16px;top:524px;width:39px;height:17px;background:#e8e8f3;text-align:right;padding-right:1px;">18</div>
<div class="cell" style="left:56px;top:524px;width:230px;height:17px;background:#e8e8f3;">Fach</div>
<div class="cell" style="left:287px;top:524px;width:283px;height:17px;background:#e8e8f3;">Gemeinschaftskunde</div>
<div class="cell" style="left:571px;top:524px;width:273px;height:17px;background:#ffffff;letter-spacing:0.15px;">Pflichtunt</div>
<div class="cell" style="left:845px;top:524px;width:44px;height:17px;background:#ffffff;text-align:right;padding-right:1px;">1</div>
<div class="cell" style="left:890px;top:524px;width:44px;height:17px;background:#ffffff;text-align:right;padding-right:1px;">1</div>
<div class="cell" style="left:935px;top:524px;width:44px;height:17px;background:#ffffff;text-align:right;padding-right:1px;">1</div>
<div class="cell" style="left:980px;top:524px;width:44px;height:17px;background:#ffffff;text-align:right;padding-right:1px;">1</div>
<div class="cell" style="left:1025px;top:524px;width:293px;height:17px;background:#ffffff;">Gemeinschaftskunde</div>
<div class="cell" style="left:1319px;top:524px;width:71px;height:17px;background:#ffffff;padding-left:1px;">1,0</div>
<div class="cell" style="left:1391px;top:524px;width:71px;height:17px;background:#ffffff;padding-left:1px;">1-6</div>
<div class="cell" style="left:1463px;top:524px;width:56px;height:17px;background:#ffffff;padding-left:1px;">Wort</div>
<div class="hl" style="left:16px;top:541px;width:1524px"></div>
<div class="cell" style="left:16px;top:542px;width:39px;height:17px;background:#ccd9f6;text-align:right;padding-right:1px;">17</div>
<div class="cell" style="left:56px;top:542px;width:230px;height:17px;background:#ccd9f6;">Fach</div>
<div class="cell" style="left:287px;top:542px;width:283px;height:17px;background:#ccd9f6;">Wirtschaftskompetenz</div>
<div class="cell" style="left:571px;top:542px;width:273px;height:17px;background:#ebf1fe;letter-spacing:0.15px;">Pflichtunt</div>
<div class="cell" style="left:845px;top:542px;width:44px;height:17px;background:#ebf1fe;text-align:right;padding-right:1px;">1</div>
<div class="cell" style="left:890px;top:542px;width:44px;height:17px;background:#ebf1fe;text-align:right;padding-right:1px;">1</div>
<div class="cell" style="left:935px;top:542px;width:44px;height:17px;background:#ebf1fe;text-align:right;padding-right:1px;">1</div>
<div class="cell" style="left:980px;top:542px;width:44px;height:17px;background:#ebf1fe;text-align:right;padding-right:1px;">1</div>
<div class="cell" style="left:1025px;top:542px;width:293px;height:17px;background:#ebf1fe;">Wirtschaftskompetenz</div>
<div class="cell" style="left:1319px;top:542px;width:71px;height:17px;background:#ebf1fe;padding-left:1px;">1,0</div>
<div class="cell" style="left:1391px;top:542px;width:71px;height:17px;background:#ebf1fe;padding-left:1px;">1-6</div>
<div class="cell" style="left:1463px;top:542px;width:56px;height:17px;background:#ebf1fe;padding-left:1px;">Wort</div>
<div class="hl" style="left:16px;top:559px;width:1524px"></div>
<div class="cell" style="left:16px;top:560px;width:39px;height:17px;background:#e8e8f3;text-align:right;padding-right:1px;">16</div>
<div class="cell" style="left:56px;top:560px;width:230px;height:17px;background:#e8e8f3;">Fach</div>
<div class="cell" style="left:287px;top:560px;width:283px;height:17px;background:#e8e8f3;">Berufsfachl.Kompetenz</div>
<div class="cell" style="left:571px;top:560px;width:273px;height:17px;background:#ffffff;letter-spacing:0.15px;">Pflichtunt</div>
<div class="cell" style="left:845px;top:560px;width:44px;height:17px;background:#ffffff;text-align:right;padding-right:1px;">1</div>
<div class="cell" style="left:890px;top:560px;width:44px;height:17px;background:#ffffff;text-align:right;padding-right:1px;">1</div>
<div class="cell" style="left:935px;top:560px;width:44px;height:17px;background:#ffffff;text-align:right;padding-right:1px;">1</div>
<div class="cell" style="left:980px;top:560px;width:44px;height:17px;background:#ffffff;text-align:right;padding-right:1px;">1</div>
<div class="cell" style="left:1025px;top:560px;width:293px;height:17px;background:#ffffff;">Berufsfachliche Kompetenz</div>
<div class="cell" style="left:1319px;top:560px;width:71px;height:17px;background:#ffffff;padding-left:1px;">1,0</div>
<div class="cell" style="left:1391px;top:560px;width:71px;height:17px;background:#ffffff;padding-left:1px;">1-6</div>
<div class="cell" style="left:1463px;top:560px;width:56px;height:17px;background:#ffffff;padding-left:1px;">Wort</div>
<div class="hl" style="left:16px;top:577px;width:1524px"></div>
<div class="cell" style="left:16px;top:578px;width:39px;height:17px;background:#ccd9f6;text-align:right;padding-right:1px;">15</div>
<div class="cell" style="left:56px;top:578px;width:230px;height:17px;background:#ccd9f6;">Fach</div>
<div class="cell" style="left:287px;top:578px;width:283px;height:17px;background:#ccd9f6;">Projektkompetenz</div>
<div class="cell" style="left:571px;top:578px;width:273px;height:17px;background:#ebf1fe;letter-spacing:0.15px;">Pflichtunt</div>
<div class="cell" style="left:845px;top:578px;width:44px;height:17px;background:#ebf1fe;text-align:right;padding-right:1px;">1</div>
<div class="cell" style="left:890px;top:578px;width:44px;height:17px;background:#ebf1fe;text-align:right;padding-right:1px;">1</div>
<div class="cell" style="left:935px;top:578px;width:44px;height:17px;background:#ebf1fe;text-align:right;padding-right:1px;">1</div>
<div class="cell" style="left:980px;top:578px;width:44px;height:17px;background:#ebf1fe;text-align:right;padding-right:1px;">1</div>
<div class="cell" style="left:1025px;top:578px;width:293px;height:17px;background:#ebf1fe;">Projektkompetenz</div>
<div class="cell" style="left:1319px;top:578px;width:71px;height:17px;background:#ebf1fe;padding-left:1px;">1,0</div>
<div class="cell" style="left:1391px;top:578px;width:71px;height:17px;background:#ebf1fe;padding-left:1px;">1-6</div>
<div class="cell" style="left:1463px;top:578px;width:56px;height:17px;background:#ebf1fe;padding-left:1px;">Wort</div>
<div class="hl" style="left:16px;top:595px;width:1524px"></div>
<div class="cell" style="left:16px;top:596px;width:39px;height:17px;background:#e8e8f3;text-align:right;padding-right:1px;">14</div>
<div class="cell" style="left:56px;top:596px;width:230px;height:17px;background:#e8e8f3;">Fach</div>
<div class="cell" style="left:287px;top:596px;width:283px;height:17px;background:#e8e8f3;letter-spacing:-0.06px;">PR Zubereiten von einfachen Speisen und Gerichten</div>
<div class="cell" style="left:571px;top:596px;width:273px;height:17px;background:#ffffff;">Prüfungsber</div>
<div class="cell" style="left:845px;top:596px;width:44px;height:17px;background:#ffffff;text-align:right;padding-right:1px;">1</div>
<div class="cell" style="left:890px;top:596px;width:44px;height:17px;background:#ffffff;text-align:right;padding-right:1px;">1</div>
<div class="cell" style="left:935px;top:596px;width:44px;height:17px;background:#ffffff;text-align:right;padding-right:1px;">1</div>
<div class="cell" style="left:980px;top:596px;width:44px;height:17px;background:#ffffff;text-align:right;padding-right:1px;">1</div>
<div class="cell" style="left:1025px;top:596px;width:293px;height:17px;background:#ffffff;">Zubereiten von einfachenSpeisen und Gerichten</div>
<div class="cell" style="left:1319px;top:596px;width:71px;height:17px;background:#ffffff;padding-left:1px;">1,0</div>
<div class="cell" style="left:1391px;top:596px;width:71px;height:17px;background:#ffffff;padding-left:1px;">1,0</div>
<div class="cell" style="left:1463px;top:596px;width:56px;height:17px;background:#ffffff;padding-left:1px;">Zahl</div>
<div class="hl" style="left:16px;top:613px;width:1524px"></div>
<div class="cell" style="left:16px;top:614px;width:39px;height:17px;background:#ccd9f6;text-align:right;padding-right:1px;">13</div>
<div class="cell" style="left:56px;top:614px;width:230px;height:17px;background:#ccd9f6;">Fach</div>
<div class="cell" style="left:287px;top:614px;width:283px;height:17px;background:#ccd9f6;">PR Planen, Zubereiten, Präsentieren 3Gang-Menü</div>
<div class="cell" style="left:571px;top:614px;width:273px;height:17px;background:#ebf1fe;">Prüfungsber</div>
<div class="cell" style="left:845px;top:614px;width:44px;height:17px;background:#ebf1fe;text-align:right;padding-right:1px;">1</div>
<div class="cell" style="left:890px;top:614px;width:44px;height:17px;background:#ebf1fe;text-align:right;padding-right:1px;">1</div>
<div class="cell" style="left:935px;top:614px;width:44px;height:17px;background:#ebf1fe;text-align:right;padding-right:1px;">1</div>
<div class="cell" style="left:980px;top:614px;width:44px;height:17px;background:#ebf1fe;text-align:right;padding-right:1px;">1</div>
<div class="cell" style="left:1025px;top:614px;width:293px;height:17px;background:#ebf1fe;letter-spacing:-0.055px;">Planen, Zubereiten und Präsentieren eines Drei-Gänge-M...</div>
<div class="cell" style="left:1319px;top:614px;width:71px;height:17px;background:#ebf1fe;padding-left:1px;">1,0</div>
<div class="cell" style="left:1391px;top:614px;width:71px;height:17px;background:#ebf1fe;padding-left:1px;">1,0</div>
<div class="cell" style="left:1463px;top:614px;width:56px;height:17px;background:#ebf1fe;padding-left:1px;">Zahl</div>
<div class="hl" style="left:16px;top:631px;width:1524px"></div>
<div class="cell" style="left:16px;top:632px;width:39px;height:17px;background:#e8e8f3;text-align:right;padding-right:1px;">12</div>
<div class="cell" style="left:56px;top:632px;width:230px;height:17px;background:#e8e8f3;">Fach</div>
<div class="cell" style="left:287px;top:632px;width:283px;height:17px;background:#e8e8f3;">PR Produkte, Lagerhaltung und Warenwirtschaft</div>
<div class="cell" style="left:571px;top:632px;width:273px;height:17px;background:#ffffff;">Prüfungsber</div>
<div class="cell" style="left:845px;top:632px;width:44px;height:17px;background:#ffffff;text-align:right;padding-right:1px;">1</div>
<div class="cell" style="left:890px;top:632px;width:44px;height:17px;background:#ffffff;text-align:right;padding-right:1px;">1</div>
<div class="cell" style="left:935px;top:632px;width:44px;height:17px;background:#ffffff;text-align:right;padding-right:1px;">1</div>
<div class="cell" style="left:980px;top:632px;width:44px;height:17px;background:#ffffff;text-align:right;padding-right:1px;">1</div>
<div class="cell" style="left:1025px;top:632px;width:293px;height:17px;background:#ffffff;">Produkte, Lagerhaltungund Warenwirtschaft</div>
<div class="cell" style="left:1319px;top:632px;width:71px;height:17px;background:#ffffff;padding-left:1px;">1,0</div>
<div class="cell" style="left:1391px;top:632px;width:71px;height:17px;background:#ffffff;padding-left:1px;">1,0</div>
<div class="cell" style="left:1463px;top:632px;width:56px;height:17px;background:#ffffff;padding-left:1px;">Zahl</div>
<div class="hl" style="left:16px;top:649px;width:1524px"></div>
<div class="cell" style="left:16px;top:650px;width:39px;height:17px;background:#ccd9f6;text-align:right;padding-right:1px;">11</div>
<div class="cell" style="left:56px;top:650px;width:230px;height:17px;background:#ccd9f6;">Fach</div>
<div class="cell" style="left:287px;top:650px;width:283px;height:17px;background:#ccd9f6;letter-spacing:0.06px;">PR Technologie, Gästeinformatuion, Arbeiten i Team</div>
<div class="cell" style="left:571px;top:650px;width:273px;height:17px;background:#ebf1fe;">Prüfungsber</div>
<div class="cell" style="left:845px;top:650px;width:44px;height:17px;background:#ebf1fe;text-align:right;padding-right:1px;">1</div>
<div class="cell" style="left:890px;top:650px;width:44px;height:17px;background:#ebf1fe;text-align:right;padding-right:1px;">1</div>
<div class="cell" style="left:935px;top:650px;width:44px;height:17px;background:#ebf1fe;text-align:right;padding-right:1px;">1</div>
<div class="cell" style="left:980px;top:650px;width:44px;height:17px;background:#ebf1fe;text-align:right;padding-right:1px;">1</div>
<div class="cell" style="left:1025px;top:650px;width:293px;height:17px;background:#ebf1fe;letter-spacing:0.07px;">Technologie, Gästeinformationund Arbeiten im Team</div>
<div class="cell" style="left:1319px;top:650px;width:71px;height:17px;background:#ebf1fe;padding-left:1px;">1,0</div>
<div class="cell" style="left:1391px;top:650px;width:71px;height:17px;background:#ebf1fe;padding-left:1px;">1,0</div>
<div class="cell" style="left:1463px;top:650px;width:56px;height:17px;background:#ebf1fe;padding-left:1px;">Zahl</div>
<div class="hl" style="left:16px;top:667px;width:1524px"></div>
<div class="cell" style="left:16px;top:668px;width:39px;height:17px;background:#e8e8f3;text-align:right;padding-right:1px;">10</div>
<div class="cell" style="left:56px;top:668px;width:230px;height:17px;background:#e8e8f3;">Fach</div>
<div class="cell" style="left:287px;top:668px;width:283px;height:17px;background:#e8e8f3;">PR Wirtschaft- und Sozialkunde</div>
<div class="cell" style="left:571px;top:668px;width:273px;height:17px;background:#ffffff;">Prüfungsber</div>
<div class="cell" style="left:845px;top:668px;width:44px;height:17px;background:#ffffff;text-align:right;padding-right:1px;">1</div>
<div class="cell" style="left:890px;top:668px;width:44px;height:17px;background:#ffffff;text-align:right;padding-right:1px;">1</div>
<div class="cell" style="left:935px;top:668px;width:44px;height:17px;background:#ffffff;text-align:right;padding-right:1px;">1</div>
<div class="cell" style="left:980px;top:668px;width:44px;height:17px;background:#ffffff;text-align:right;padding-right:1px;">1</div>
<div class="cell" style="left:1025px;top:668px;width:293px;height:17px;background:#ffffff;">Wirtschaft- und Sozialkunde</div>
<div class="cell" style="left:1319px;top:668px;width:71px;height:17px;background:#ffffff;padding-left:1px;">1,0</div>
<div class="cell" style="left:1391px;top:668px;width:71px;height:17px;background:#ffffff;padding-left:1px;">1,0</div>
<div class="cell" style="left:1463px;top:668px;width:56px;height:17px;background:#ffffff;padding-left:1px;">Zahl</div>
<div class="hl" style="left:16px;top:685px;width:1524px"></div>
<div class="cell" style="left:16px;top:686px;width:39px;height:17px;background:#ccd9f6;text-align:right;padding-right:1px;">9</div>
<div class="cell" style="left:56px;top:686px;width:230px;height:17px;background:#ccd9f6;">Fach</div>
<div class="cell" style="left:287px;top:686px;width:283px;height:17px;background:#ccd9f6;">Deutsch II</div>
<div class="cell" style="left:571px;top:686px;width:273px;height:17px;background:#ebf1fe;letter-spacing:0.15px;">Wahlunt</div>
<div class="cell" style="left:845px;top:686px;width:44px;height:17px;background:#ebf1fe;text-align:right;padding-right:1px;">1</div>
<div class="cell" style="left:890px;top:686px;width:44px;height:17px;background:#ebf1fe;text-align:right;padding-right:1px;">1</div>
<div class="cell" style="left:935px;top:686px;width:44px;height:17px;background:#ebf1fe;text-align:right;padding-right:1px;">1</div>
<div class="cell" style="left:980px;top:686px;width:44px;height:17px;background:#ebf1fe;text-align:right;padding-right:1px;">1</div>
<div class="cell" style="left:1025px;top:686px;width:293px;height:17px;background:#ebf1fe;">Deutsch II</div>
<div class="cell" style="left:1319px;top:686px;width:71px;height:17px;background:#ebf1fe;padding-left:1px;">1,0</div>
<div class="cell" style="left:1391px;top:686px;width:71px;height:17px;background:#ebf1fe;padding-left:1px;">1-6</div>
<div class="cell" style="left:1463px;top:686px;width:56px;height:17px;background:#ebf1fe;padding-left:1px;">Wort</div>
<div class="hl" style="left:16px;top:703px;width:1524px"></div>
<div class="cell" style="left:16px;top:704px;width:39px;height:17px;background:#e8e8f3;text-align:right;padding-right:1px;">8</div>
<div class="cell" style="left:56px;top:704px;width:230px;height:17px;background:#e8e8f3;">Fach</div>
<div class="cell" style="left:287px;top:704px;width:283px;height:17px;background:#e8e8f3;">Mathematik II</div>
<div class="cell" style="left:571px;top:704px;width:273px;height:17px;background:#ffffff;letter-spacing:0.15px;">Wahlunt</div>
<div class="cell" style="left:845px;top:704px;width:44px;height:17px;background:#ffffff;text-align:right;padding-right:1px;">1</div>
<div class="cell" style="left:890px;top:704px;width:44px;height:17px;background:#ffffff;text-align:right;padding-right:1px;">1</div>
<div class="cell" style="left:935px;top:704px;width:44px;height:17px;background:#ffffff;text-align:right;padding-right:1px;">1</div>
<div class="cell" style="left:980px;top:704px;width:44px;height:17px;background:#ffffff;text-align:right;padding-right:1px;">1</div>
<div class="cell" style="left:1025px;top:704px;width:293px;height:17px;background:#ffffff;">Mathematik II</div>
<div class="cell" style="left:1319px;top:704px;width:71px;height:17px;background:#ffffff;padding-left:1px;">1,0</div>
<div class="cell" style="left:1391px;top:704px;width:71px;height:17px;background:#ffffff;padding-left:1px;">1-6</div>
<div class="cell" style="left:1463px;top:704px;width:56px;height:17px;background:#ffffff;padding-left:1px;">Wort</div>
<div class="hl" style="left:16px;top:721px;width:1524px"></div>
<div class="cell" style="left:16px;top:722px;width:39px;height:17px;background:#ccd9f6;text-align:right;padding-right:1px;">7</div>
<div class="cell" style="left:56px;top:722px;width:230px;height:17px;background:#ccd9f6;">Fach</div>
<div class="cell" style="left:287px;top:722px;width:283px;height:17px;background:#ccd9f6;">Englisch II</div>
<div class="cell" style="left:571px;top:722px;width:273px;height:17px;background:#ebf1fe;letter-spacing:0.15px;">Wahlunt</div>
<div class="cell" style="left:845px;top:722px;width:44px;height:17px;background:#ebf1fe;text-align:right;padding-right:1px;">1</div>
<div class="cell" style="left:890px;top:722px;width:44px;height:17px;background:#ebf1fe;text-align:right;padding-right:1px;">1</div>
<div class="cell" style="left:935px;top:722px;width:44px;height:17px;background:#ebf1fe;text-align:right;padding-right:1px;">1</div>
<div class="cell" style="left:980px;top:722px;width:44px;height:17px;background:#ebf1fe;text-align:right;padding-right:1px;">1</div>
<div class="cell" style="left:1025px;top:722px;width:293px;height:17px;background:#ebf1fe;">Englisch II</div>
<div class="cell" style="left:1319px;top:722px;width:71px;height:17px;background:#ebf1fe;padding-left:1px;">1,0</div>
<div class="cell" style="left:1391px;top:722px;width:71px;height:17px;background:#ebf1fe;padding-left:1px;">1-6</div>
<div class="cell" style="left:1463px;top:722px;width:56px;height:17px;background:#ebf1fe;padding-left:1px;">Wort</div>
<div class="hl" style="left:16px;top:739px;width:1524px"></div>
<div class="cell" style="left:16px;top:740px;width:39px;height:17px;background:#e8e8f3;text-align:right;padding-right:1px;">6</div>
<div class="cell" style="left:56px;top:740px;width:230px;height:17px;background:#ffffff;">Bemerkungen</div>
<div class="cell" style="left:287px;top:740px;width:283px;height:17px;background:#ffffff;">Bemerkungen</div>
<div class="cell" style="left:571px;top:740px;width:273px;height:17px;background:#e8e8f3;"></div>
<div class="cell" style="left:845px;top:740px;width:44px;height:17px;background:#e8e8f3;text-align:right;padding-right:1px;"></div>
<div class="cell" style="left:890px;top:740px;width:44px;height:17px;background:#e8e8f3;text-align:right;padding-right:1px;"></div>
<div class="cell" style="left:935px;top:740px;width:44px;height:17px;background:#e8e8f3;text-align:right;padding-right:1px;"></div>
<div class="cell" style="left:980px;top:740px;width:44px;height:17px;background:#e8e8f3;text-align:right;padding-right:1px;"></div>
<div class="cell" style="left:1025px;top:740px;width:293px;height:17px;background:#ffffff;">Bemerkungen</div>
<div class="cell" style="left:1319px;top:740px;width:71px;height:17px;background:#e8e8f3;padding-left:1px;"></div>
<div class="cell" style="left:1391px;top:740px;width:71px;height:17px;background:#e8e8f3;padding-left:1px;"></div>
<div class="cell" style="left:1463px;top:740px;width:56px;height:17px;background:#e8e8f3;padding-left:1px;"></div>
<div class="hl" style="left:16px;top:757px;width:1524px"></div>
<div class="cell" style="left:16px;top:758px;width:39px;height:17px;background:#ccd9f6;text-align:right;padding-right:1px;">5</div>
<div class="cell" style="left:56px;top:758px;width:230px;height:17px;background:#ebf1fe;">bestanden</div>
<div class="cell" style="left:287px;top:758px;width:283px;height:17px;background:#ebf1fe;">bestanden</div>
<div class="cell" style="left:571px;top:758px;width:273px;height:17px;background:#ccd9f6;"></div>
<div class="cell" style="left:845px;top:758px;width:44px;height:17px;background:#ccd9f6;text-align:right;padding-right:1px;"></div>
<div class="cell" style="left:890px;top:758px;width:44px;height:17px;background:#ccd9f6;text-align:right;padding-right:1px;"></div>
<div class="cell" style="left:935px;top:758px;width:44px;height:17px;background:#ccd9f6;text-align:right;padding-right:1px;"></div>
<div class="cell" style="left:980px;top:758px;width:44px;height:17px;background:#ccd9f6;text-align:right;padding-right:1px;"></div>
<div class="cell" style="left:1025px;top:758px;width:293px;height:17px;background:#ebf1fe;">bestanden</div>
<div class="cell" style="left:1319px;top:758px;width:71px;height:17px;background:#ccd9f6;padding-left:1px;"></div>
<div class="cell" style="left:1391px;top:758px;width:71px;height:17px;background:#ccd9f6;padding-left:1px;"></div>
<div class="cell" style="left:1463px;top:758px;width:56px;height:17px;background:#ccd9f6;padding-left:1px;"></div>
<div class="hl" style="left:16px;top:775px;width:1524px"></div>
<div class="cell" style="left:16px;top:776px;width:39px;height:17px;background:#e8e8f3;text-align:right;padding-right:1px;">4</div>
<div class="cell" style="left:56px;top:776px;width:230px;height:17px;background:#ffffff;">Zusatzprüfung</div>
<div class="cell" style="left:287px;top:776px;width:283px;height:17px;background:#ffffff;">Zusatzprüfung</div>
<div class="cell" style="left:571px;top:776px;width:273px;height:17px;background:#e8e8f3;"></div>
<div class="cell" style="left:845px;top:776px;width:44px;height:17px;background:#e8e8f3;text-align:right;padding-right:1px;"></div>
<div class="cell" style="left:890px;top:776px;width:44px;height:17px;background:#e8e8f3;text-align:right;padding-right:1px;"></div>
<div class="cell" style="left:935px;top:776px;width:44px;height:17px;background:#e8e8f3;text-align:right;padding-right:1px;"></div>
<div class="cell" style="left:980px;top:776px;width:44px;height:17px;background:#e8e8f3;text-align:right;padding-right:1px;"></div>
<div class="cell" style="left:1025px;top:776px;width:293px;height:17px;background:#ffffff;">Zusatzprüfung</div>
<div class="cell" style="left:1319px;top:776px;width:71px;height:17px;background:#e8e8f3;padding-left:1px;"></div>
<div class="cell" style="left:1391px;top:776px;width:71px;height:17px;background:#e8e8f3;padding-left:1px;"></div>
<div class="cell" style="left:1463px;top:776px;width:56px;height:17px;background:#e8e8f3;padding-left:1px;"></div>
<div class="hl" style="left:16px;top:793px;width:1524px"></div>
<div class="cell" style="left:16px;top:794px;width:39px;height:17px;background:#ccd9f6;text-align:right;padding-right:1px;">3</div>
<div class="cell" style="left:56px;top:794px;width:230px;height:17px;background:#ebf1fe;">Lob / Preis</div>
<div class="cell" style="left:287px;top:794px;width:283px;height:17px;background:#ebf1fe;">Lob / Preis</div>
<div class="cell" style="left:571px;top:794px;width:273px;height:17px;background:#ccd9f6;"></div>
<div class="cell" style="left:845px;top:794px;width:44px;height:17px;background:#ccd9f6;text-align:right;padding-right:1px;"></div>
<div class="cell" style="left:890px;top:794px;width:44px;height:17px;background:#ccd9f6;text-align:right;padding-right:1px;"></div>
<div class="cell" style="left:935px;top:794px;width:44px;height:17px;background:#ccd9f6;text-align:right;padding-right:1px;"></div>
<div class="cell" style="left:980px;top:794px;width:44px;height:17px;background:#ccd9f6;text-align:right;padding-right:1px;"></div>
<div class="cell" style="left:1025px;top:794px;width:293px;height:17px;background:#ebf1fe;">Lob / Preis</div>
<div class="cell" style="left:1319px;top:794px;width:71px;height:17px;background:#ccd9f6;padding-left:1px;"></div>
<div class="cell" style="left:1391px;top:794px;width:71px;height:17px;background:#ccd9f6;padding-left:1px;"></div>
<div class="cell" style="left:1463px;top:794px;width:56px;height:17px;background:#ccd9f6;padding-left:1px;"></div>
<div class="hl" style="left:16px;top:811px;width:1524px"></div>
<div class="cell" style="left:16px;top:812px;width:39px;height:17px;background:#e8e8f3;text-align:right;padding-right:1px;">2</div>
<div class="cell" style="left:56px;top:812px;width:230px;height:17px;background:#ffffff;">Durchschnitt 1</div>
<div class="cell" style="left:287px;top:812px;width:283px;height:17px;background:#ffffff;">Lob / Preis</div>
<div class="cell" style="left:571px;top:812px;width:273px;height:17px;background:#e8e8f3;"></div>
<div class="cell" style="left:845px;top:812px;width:44px;height:17px;background:#e8e8f3;text-align:right;padding-right:1px;"></div>
<div class="cell" style="left:890px;top:812px;width:44px;height:17px;background:#e8e8f3;text-align:right;padding-right:1px;"></div>
<div class="cell" style="left:935px;top:812px;width:44px;height:17px;background:#e8e8f3;text-align:right;padding-right:1px;"></div>
<div class="cell" style="left:980px;top:812px;width:44px;height:17px;background:#e8e8f3;text-align:right;padding-right:1px;"></div>
<div class="cell" style="left:1025px;top:812px;width:293px;height:17px;background:#ffffff;">Durchschnitt 1</div>
<div class="cell" style="left:1319px;top:812px;width:71px;height:17px;background:#e8e8f3;padding-left:1px;"></div>
<div class="cell" style="left:1391px;top:812px;width:71px;height:17px;background:#e8e8f3;padding-left:1px;"></div>
<div class="cell" style="left:1463px;top:812px;width:56px;height:17px;background:#e8e8f3;padding-left:1px;"></div>
<div class="hl" style="left:16px;top:829px;width:1524px"></div>
<div class="cell" style="left:16px;top:830px;width:39px;height:17px;background:#ccd9f6;text-align:right;padding-right:1px;">1</div>
<div class="cell" style="left:56px;top:830px;width:230px;height:17px;background:#ebf1fe;">Durchschnitt 3</div>
<div class="cell" style="left:287px;top:830px;width:283px;height:17px;background:#ebf1fe;">Durchschnitt 3</div>
<div class="cell" style="left:571px;top:830px;width:273px;height:17px;background:#ccd9f6;"></div>
<div class="cell" style="left:845px;top:830px;width:44px;height:17px;background:#ccd9f6;text-align:right;padding-right:1px;"></div>
<div class="cell" style="left:890px;top:830px;width:44px;height:17px;background:#ccd9f6;text-align:right;padding-right:1px;"></div>
<div class="cell" style="left:935px;top:830px;width:44px;height:17px;background:#ccd9f6;text-align:right;padding-right:1px;"></div>
<div class="cell" style="left:980px;top:830px;width:44px;height:17px;background:#ccd9f6;text-align:right;padding-right:1px;"></div>
<div class="cell" style="left:1025px;top:830px;width:293px;height:17px;background:#ebf1fe;">Durchschnitt 3</div>
<div class="cell" style="left:1319px;top:830px;width:71px;height:17px;background:#ccd9f6;padding-left:1px;"></div>
<div class="cell" style="left:1391px;top:830px;width:71px;height:17px;background:#ccd9f6;padding-left:1px;"></div>
<div class="cell" style="left:1463px;top:830px;width:56px;height:17px;background:#ccd9f6;padding-left:1px;"></div>
<div class="hl" style="left:16px;top:847px;width:1524px"></div>
<div class="cell" style="left:16px;top:848px;width:39px;height:11px;background:#e8e8f3;text-align:right;padding-right:1px;"></div>
<div class="cell" style="left:56px;top:848px;width:230px;height:11px;background:#e8e8f3;"></div>
<div class="cell" style="left:287px;top:848px;width:283px;height:11px;background:#e8e8f3;"></div>
<div class="cell" style="left:571px;top:848px;width:273px;height:11px;background:#e8e8f3;"></div>
<div class="cell" style="left:845px;top:848px;width:44px;height:11px;background:#e8e8f3;text-align:right;padding-right:1px;"></div>
<div class="cell" style="left:890px;top:848px;width:44px;height:11px;background:#e8e8f3;text-align:right;padding-right:1px;"></div>
<div class="cell" style="left:935px;top:848px;width:44px;height:11px;background:#e8e8f3;text-align:right;padding-right:1px;"></div>
<div class="cell" style="left:980px;top:848px;width:44px;height:11px;background:#e8e8f3;text-align:right;padding-right:1px;"></div>
<div class="cell" style="left:1025px;top:848px;width:293px;height:11px;background:#e8e8f3;"></div>
<div class="cell" style="left:1319px;top:848px;width:71px;height:11px;background:#e8e8f3;padding-left:1px;"></div>
<div class="cell" style="left:1391px;top:848px;width:71px;height:11px;background:#e8e8f3;padding-left:1px;"></div>
<div class="cell" style="left:1463px;top:848px;width:56px;height:11px;background:#e8e8f3;padding-left:1px;"></div>
<div class="vl" style="left:55px;top:452px;height:407px"></div>
<div class="vl" style="left:286px;top:452px;height:407px"></div>
<div class="vl" style="left:570px;top:452px;height:407px"></div>
<div class="vl" style="left:844px;top:452px;height:407px"></div>
<div class="vl" style="left:889px;top:452px;height:407px"></div>
<div class="vl" style="left:934px;top:452px;height:407px"></div>
<div class="vl" style="left:979px;top:452px;height:407px"></div>
<div class="vl" style="left:1024px;top:452px;height:407px"></div>
<div class="vl" style="left:1318px;top:452px;height:407px"></div>
<div class="vl" style="left:1390px;top:452px;height:407px"></div>
<div class="vl" style="left:1462px;top:452px;height:407px"></div>
<div class="vl" style="left:1519px;top:452px;height:407px"></div>
<div class="vl" style="left:1539px;top:452px;height:407px"></div>
<svg class="a" style="left:1520px;top:452px" width="19" height="17" viewBox="0 0 19 17"><rect x="0.5" y="0.5" width="18" height="16" rx="2.3" fill="url(#gdel)" stroke="#0f3672"/><path d="M1.5 14.5 V3.2 Q1.5 1.5 3.2 1.5 H16.5" fill="none" stroke="#fff" stroke-width="1" opacity="0.85"/><path d="M4.8999999999999995 3.1000000000000005 L15.3 13.5 M15.3 3.1000000000000005 L4.8999999999999995 13.5" stroke="url(#gred)" stroke-width="3.0"/></svg>
<svg class="a" style="left:1520px;top:470px" width="19" height="17" viewBox="0 0 19 17"><rect x="0.5" y="0.5" width="18" height="16" rx="2.3" fill="url(#gdel)" stroke="#0f3672"/><path d="M1.5 14.5 V3.2 Q1.5 1.5 3.2 1.5 H16.5" fill="none" stroke="#fff" stroke-width="1" opacity="0.85"/><path d="M4.8999999999999995 3.1000000000000005 L15.3 13.5 M15.3 3.1000000000000005 L4.8999999999999995 13.5" stroke="url(#gred)" stroke-width="3.0"/></svg>
<svg class="a" style="left:1520px;top:488px" width="19" height="17" viewBox="0 0 19 17"><rect x="0.5" y="0.5" width="18" height="16" rx="2.3" fill="url(#gdel)" stroke="#0f3672"/><path d="M1.5 14.5 V3.2 Q1.5 1.5 3.2 1.5 H16.5" fill="none" stroke="#fff" stroke-width="1" opacity="0.85"/><path d="M4.8999999999999995 3.1000000000000005 L15.3 13.5 M15.3 3.1000000000000005 L4.8999999999999995 13.5" stroke="url(#gred)" stroke-width="3.0"/></svg>
<svg class="a" style="left:1520px;top:506px" width="19" height="17" viewBox="0 0 19 17"><rect x="0.5" y="0.5" width="18" height="16" rx="2.3" fill="url(#gdel)" stroke="#0f3672"/><path d="M1.5 14.5 V3.2 Q1.5 1.5 3.2 1.5 H16.5" fill="none" stroke="#fff" stroke-width="1" opacity="0.85"/><path d="M4.8999999999999995 3.1000000000000005 L15.3 13.5 M15.3 3.1000000000000005 L4.8999999999999995 13.5" stroke="url(#gred)" stroke-width="3.0"/></svg>
<svg class="a" style="left:1520px;top:524px" width="19" height="17" viewBox="0 0 19 17"><rect x="0.5" y="0.5" width="18" height="16" rx="2.3" fill="url(#gdel)" stroke="#0f3672"/><path d="M1.5 14.5 V3.2 Q1.5 1.5 3.2 1.5 H16.5" fill="none" stroke="#fff" stroke-width="1" opacity="0.85"/><path d="M4.8999999999999995 3.1000000000000005 L15.3 13.5 M15.3 3.1000000000000005 L4.8999999999999995 13.5" stroke="url(#gred)" stroke-width="3.0"/></svg>
<svg class="a" style="left:1520px;top:542px" width="19" height="17" viewBox="0 0 19 17"><rect x="0.5" y="0.5" width="18" height="16" rx="2.3" fill="url(#gdel)" stroke="#0f3672"/><path d="M1.5 14.5 V3.2 Q1.5 1.5 3.2 1.5 H16.5" fill="none" stroke="#fff" stroke-width="1" opacity="0.85"/><path d="M4.8999999999999995 3.1000000000000005 L15.3 13.5 M15.3 3.1000000000000005 L4.8999999999999995 13.5" stroke="url(#gred)" stroke-width="3.0"/></svg>
<svg class="a" style="left:1520px;top:560px" width="19" height="17" viewBox="0 0 19 17"><rect x="0.5" y="0.5" width="18" height="16" rx="2.3" fill="url(#gdel)" stroke="#0f3672"/><path d="M1.5 14.5 V3.2 Q1.5 1.5 3.2 1.5 H16.5" fill="none" stroke="#fff" stroke-width="1" opacity="0.85"/><path d="M4.8999999999999995 3.1000000000000005 L15.3 13.5 M15.3 3.1000000000000005 L4.8999999999999995 13.5" stroke="url(#gred)" stroke-width="3.0"/></svg>
<svg class="a" style="left:1520px;top:578px" width="19" height="17" viewBox="0 0 19 17"><rect x="0.5" y="0.5" width="18" height="16" rx="2.3" fill="url(#gdel)" stroke="#0f3672"/><path d="M1.5 14.5 V3.2 Q1.5 1.5 3.2 1.5 H16.5" fill="none" stroke="#fff" stroke-width="1" opacity="0.85"/><path d="M4.8999999999999995 3.1000000000000005 L15.3 13.5 M15.3 3.1000000000000005 L4.8999999999999995 13.5" stroke="url(#gred)" stroke-width="3.0"/></svg>
<svg class="a" style="left:1520px;top:596px" width="19" height="17" viewBox="0 0 19 17"><rect x="0.5" y="0.5" width="18" height="16" rx="2.3" fill="url(#gdel)" stroke="#0f3672"/><path d="M1.5 14.5 V3.2 Q1.5 1.5 3.2 1.5 H16.5" fill="none" stroke="#fff" stroke-width="1" opacity="0.85"/><path d="M4.8999999999999995 3.1000000000000005 L15.3 13.5 M15.3 3.1000000000000005 L4.8999999999999995 13.5" stroke="url(#gred)" stroke-width="3.0"/></svg>
<svg class="a" style="left:1520px;top:614px" width="19" height="17" viewBox="0 0 19 17"><rect x="0.5" y="0.5" width="18" height="16" rx="2.3" fill="url(#gdel)" stroke="#0f3672"/><path d="M1.5 14.5 V3.2 Q1.5 1.5 3.2 1.5 H16.5" fill="none" stroke="#fff" stroke-width="1" opacity="0.85"/><path d="M4.8999999999999995 3.1000000000000005 L15.3 13.5 M15.3 3.1000000000000005 L4.8999999999999995 13.5" stroke="url(#gred)" stroke-width="3.0"/></svg>
<svg class="a" style="left:1520px;top:632px" width="19" height="17" viewBox="0 0 19 17"><rect x="0.5" y="0.5" width="18" height="16" rx="2.3" fill="url(#gdel)" stroke="#0f3672"/><path d="M1.5 14.5 V3.2 Q1.5 1.5 3.2 1.5 H16.5" fill="none" stroke="#fff" stroke-width="1" opacity="0.85"/><path d="M4.8999999999999995 3.1000000000000005 L15.3 13.5 M15.3 3.1000000000000005 L4.8999999999999995 13.5" stroke="url(#gred)" stroke-width="3.0"/></svg>
<svg class="a" style="left:1520px;top:650px" width="19" height="17" viewBox="0 0 19 17"><rect x="0.5" y="0.5" width="18" height="16" rx="2.3" fill="url(#gdel)" stroke="#0f3672"/><path d="M1.5 14.5 V3.2 Q1.5 1.5 3.2 1.5 H16.5" fill="none" stroke="#fff" stroke-width="1" opacity="0.85"/><path d="M4.8999999999999995 3.1000000000000005 L15.3 13.5 M15.3 3.1000000000000005 L4.8999999999999995 13.5" stroke="url(#gred)" stroke-width="3.0"/></svg>
<svg class="a" style="left:1520px;top:668px" width="19" height="17" viewBox="0 0 19 17"><rect x="0.5" y="0.5" width="18" height="16" rx="2.3" fill="url(#gdel)" stroke="#0f3672"/><path d="M1.5 14.5 V3.2 Q1.5 1.5 3.2 1.5 H16.5" fill="none" stroke="#fff" stroke-width="1" opacity="0.85"/><path d="M4.8999999999999995 3.1000000000000005 L15.3 13.5 M15.3 3.1000000000000005 L4.8999999999999995 13.5" stroke="url(#gred)" stroke-width="3.0"/></svg>
<svg class="a" style="left:1520px;top:686px" width="19" height="17" viewBox="0 0 19 17"><rect x="0.5" y="0.5" width="18" height="16" rx="2.3" fill="url(#gdel)" stroke="#0f3672"/><path d="M1.5 14.5 V3.2 Q1.5 1.5 3.2 1.5 H16.5" fill="none" stroke="#fff" stroke-width="1" opacity="0.85"/><path d="M4.8999999999999995 3.1000000000000005 L15.3 13.5 M15.3 3.1000000000000005 L4.8999999999999995 13.5" stroke="url(#gred)" stroke-width="3.0"/></svg>
<svg class="a" style="left:1520px;top:704px" width="19" height="17" viewBox="0 0 19 17"><rect x="0.5" y="0.5" width="18" height="16" rx="2.3" fill="url(#gdel)" stroke="#0f3672"/><path d="M1.5 14.5 V3.2 Q1.5 1.5 3.2 1.5 H16.5" fill="none" stroke="#fff" stroke-width="1" opacity="0.85"/><path d="M4.8999999999999995 3.1000000000000005 L15.3 13.5 M15.3 3.1000000000000005 L4.8999999999999995 13.5" stroke="url(#gred)" stroke-width="3.0"/></svg>
<svg class="a" style="left:1520px;top:722px" width="19" height="17" viewBox="0 0 19 17"><rect x="0.5" y="0.5" width="18" height="16" rx="2.3" fill="url(#gdel)" stroke="#0f3672"/><path d="M1.5 14.5 V3.2 Q1.5 1.5 3.2 1.5 H16.5" fill="none" stroke="#fff" stroke-width="1" opacity="0.85"/><path d="M4.8999999999999995 3.1000000000000005 L15.3 13.5 M15.3 3.1000000000000005 L4.8999999999999995 13.5" stroke="url(#gred)" stroke-width="3.0"/></svg>
<svg class="a" style="left:1520px;top:740px" width="19" height="17" viewBox="0 0 19 17"><rect x="0.5" y="0.5" width="18" height="16" rx="2.3" fill="url(#gdel)" stroke="#0f3672"/><path d="M1.5 14.5 V3.2 Q1.5 1.5 3.2 1.5 H16.5" fill="none" stroke="#fff" stroke-width="1" opacity="0.85"/><path d="M4.8999999999999995 3.1000000000000005 L15.3 13.5 M15.3 3.1000000000000005 L4.8999999999999995 13.5" stroke="url(#gred)" stroke-width="3.0"/></svg>
<svg class="a" style="left:1520px;top:758px" width="19" height="17" viewBox="0 0 19 17"><rect x="0.5" y="0.5" width="18" height="16" rx="2.3" fill="url(#gdel)" stroke="#0f3672"/><path d="M1.5 14.5 V3.2 Q1.5 1.5 3.2 1.5 H16.5" fill="none" stroke="#fff" stroke-width="1" opacity="0.85"/><path d="M4.8999999999999995 3.1000000000000005 L15.3 13.5 M15.3 3.1000000000000005 L4.8999999999999995 13.5" stroke="url(#gred)" stroke-width="3.0"/></svg>
<svg class="a" style="left:1520px;top:776px" width="19" height="17" viewBox="0 0 19 17"><rect x="0.5" y="0.5" width="18" height="16" rx="2.3" fill="url(#gdel)" stroke="#0f3672"/><path d="M1.5 14.5 V3.2 Q1.5 1.5 3.2 1.5 H16.5" fill="none" stroke="#fff" stroke-width="1" opacity="0.85"/><path d="M4.8999999999999995 3.1000000000000005 L15.3 13.5 M15.3 3.1000000000000005 L4.8999999999999995 13.5" stroke="url(#gred)" stroke-width="3.0"/></svg>
<svg class="a" style="left:1520px;top:794px" width="19" height="17" viewBox="0 0 19 17"><rect x="0.5" y="0.5" width="18" height="16" rx="2.3" fill="url(#gdel)" stroke="#0f3672"/><path d="M1.5 14.5 V3.2 Q1.5 1.5 3.2 1.5 H16.5" fill="none" stroke="#fff" stroke-width="1" opacity="0.85"/><path d="M4.8999999999999995 3.1000000000000005 L15.3 13.5 M15.3 3.1000000000000005 L4.8999999999999995 13.5" stroke="url(#gred)" stroke-width="3.0"/></svg>
<svg class="a" style="left:1520px;top:812px" width="19" height="17" viewBox="0 0 19 17"><rect x="0.5" y="0.5" width="18" height="16" rx="2.3" fill="url(#gdel)" stroke="#0f3672"/><path d="M1.5 14.5 V3.2 Q1.5 1.5 3.2 1.5 H16.5" fill="none" stroke="#fff" stroke-width="1" opacity="0.85"/><path d="M4.8999999999999995 3.1000000000000005 L15.3 13.5 M15.3 3.1000000000000005 L4.8999999999999995 13.5" stroke="url(#gred)" stroke-width="3.0"/></svg>
<svg class="a" style="left:1520px;top:830px" width="19" height="17" viewBox="0 0 19 17"><rect x="0.5" y="0.5" width="18" height="16" rx="2.3" fill="url(#gdel)" stroke="#0f3672"/><path d="M1.5 14.5 V3.2 Q1.5 1.5 3.2 1.5 H16.5" fill="none" stroke="#fff" stroke-width="1" opacity="0.85"/><path d="M4.8999999999999995 3.1000000000000005 L15.3 13.5 M15.3 3.1000000000000005 L4.8999999999999995 13.5" stroke="url(#gred)" stroke-width="3.0"/></svg>
<svg class="a" style="left:1520px;top:848px" width="19" height="17" viewBox="0 0 19 17"><rect x="0.5" y="0.5" width="18" height="16" rx="2.3" fill="#fbfbfd" stroke="#cfcfd8"/><path d="M4.8999999999999995 3.1000000000000005 L15.3 13.5 M15.3 3.1000000000000005 L4.8999999999999995 13.5" stroke="#8c8c8c" stroke-width="3.0"/></svg>
<div class="sb" style="left:1540px;top:452px;width:17px;height:407px"></div>
<svg class="a" style="left:1541px;top:453px" width="16" height="15" viewBox="0 0 16 15"><rect x="2" y="0" width="12" height="15" fill="url(#gsb)"/><path d="M4.0 9.9 L8.0 5.9 L12.0 9.9" fill="none" stroke="#d0d0d3" stroke-width="2.2"/></svg>
<svg class="a" style="left:1540px;top:418px" width="17" height="34" viewBox="0 0 17 34"><defs><linearGradient id="gch418" x1="0" y1="0" x2="0" y2="1"><stop offset="0" stop-color="#ffffff"/><stop offset="0.5" stop-color="#f0f0f8"/><stop offset="1" stop-color="#c8cade"/></linearGradient></defs><rect x="0.5" y="0.5" width="16" height="33" rx="3" fill="url(#gch418)" stroke="#1f417c"/><rect x="1.2" y="2" width="1.3" height="30" fill="#fff" opacity="0.9"/><g transform="translate(4 11)" fill="#000"><rect x="0" y="0" width="9.4" height="1.2"/><rect x="0" y="2.2" width="9.4" height="1.1"/><rect x="0" y="0" width="1.2" height="9.2"/><rect x="4.1" y="0" width="1.1" height="4.8"/><rect x="8.2" y="0" width="1.2" height="4.8"/><rect x="0" y="8" width="3" height="1.2"/><path d="M3 6 H10.4 L6.7 10.2 Z"/></g></svg>
<div class="red" style="left:282px;top:593px;width:1238px;height:94px"></div>
<div class="red" style="left:1316px;top:417px;width:74px;height:325px"></div>
</body></html>
